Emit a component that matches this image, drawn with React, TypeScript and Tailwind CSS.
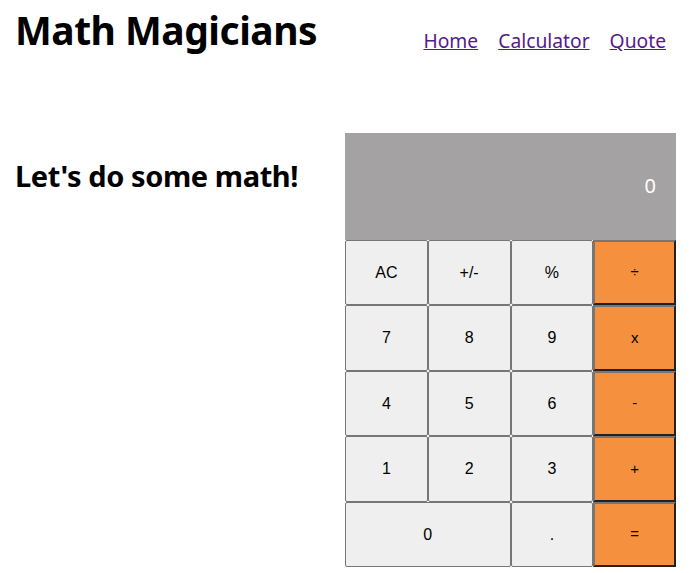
import React from 'react';

const keys: { label: string; wide?: boolean; op?: boolean }[] = [
  { label: 'AC' }, { label: '+/-' }, { label: '%' }, { label: '÷', op: true },
  { label: '7' }, { label: '8' }, { label: '9' }, { label: 'x', op: true },
  { label: '4' }, { label: '5' }, { label: '6' }, { label: '-', op: true },
  { label: '1' }, { label: '2' }, { label: '3' }, { label: '+', op: true },
  { label: '0', wide: true }, { label: '.' }, { label: '=', op: true },
];

const Calculator = () => (
  <div className="w-[331px]">
    <div className="h-[107px] bg-[#a4a2a2] flex items-center justify-end pr-[20px] text-white text-[20px] font-['Noto_Sans',sans-serif]">
      0
    </div>
    <div className="grid grid-cols-4 auto-rows-[65.5px]">
      {keys.map((k) => (
        <button
          key={k.label}
          className={
            k.op
              ? "bg-[#f5913e] border-2 border-t-[#767676] border-l-[#767676] border-r-[#222] border-b-[#222] text-[15px] text-black font-['Liberation_Sans',Arial,sans-serif]"
              : `${k.wide ? 'col-span-2' : ''} bg-[#efefef] border border-[#767676] rounded-[2px] text-[16px] text-black font-['Liberation_Sans',Arial,sans-serif]`
          }
        >
          {k.label}
        </button>
      ))}
    </div>
  </div>
);

export default function App() {
  return (
    <div className="min-h-screen bg-white font-['Noto_Sans',sans-serif] text-black">
      <header className="flex justify-between items-start pl-[15px] pr-[26px]">
        <h1 className="text-[39px] font-bold leading-none mt-[10px] tracking-[-0.5px]">Math Magicians</h1>
        <nav className="flex gap-[20px] mt-[27px] text-[19.25px]">
          <a href="#" className="underline text-[#551a8b]">Home</a>
          <a href="#" className="underline text-[#551a8b]">Calculator</a>
          <a href="#" className="underline text-[#551a8b]">Quote</a>
        </nav>
      </header>
      <main className="flex justify-between pl-[15px] pr-[16px] mt-[77px]">
        <h2 className="text-[29px] font-bold mt-[28px] leading-none tracking-[-0.4px]">Let's do some math!</h2>
        <Calculator />
      </main>
    </div>
  );
}
